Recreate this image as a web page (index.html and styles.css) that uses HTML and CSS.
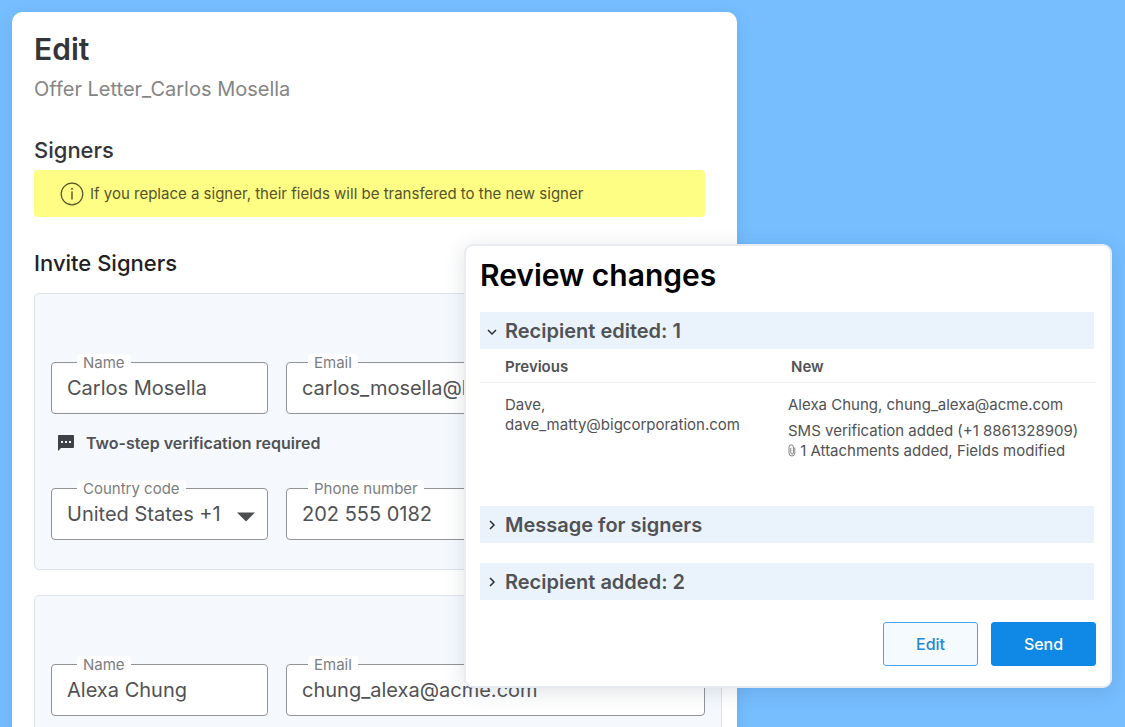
FILE: index.html
```html
<!DOCTYPE html>
<html lang="en">
<head>
    <meta charset="UTF-8">
    <meta name="viewport" content="width=device-width, initial-scale=1.0">
    <title>Edit - Offer Letter</title>
    <link rel="stylesheet" href="styles.css">
</head>
<body>

    <main class="sheet">
        <h1>Edit</h1>
        <p class="document-name">Offer Letter_Carlos Mosella</p>

        <h2 class="signers-title">Signers</h2>
        <div class="notice">
            <svg class="info-icon" viewBox="0 0 24 24" aria-hidden="true">
                <circle cx="12" cy="12" r="10.8" fill="none" stroke="currentColor" stroke-width="1.2"/>
                <path d="M12 9.5v8" stroke="currentColor" stroke-width="1.4"/>
                <circle cx="12" cy="6.8" r="1" fill="currentColor"/>
            </svg>
            <span>If you replace a signer, their fields will be transfered to the new signer</span>
        </div>

        <h2 class="invite-title">Invite Signers</h2>

        <section class="card">
            <div class="row">
                <div class="field">
                    <label for="name-1">Name</label>
                    <input type="text" id="name-1" value="Carlos Mosella">
                </div>
                <div class="field">
                    <label for="email-1">Email</label>
                    <input type="text" id="email-1" value="carlos_mosella@bigcorporation.com">
                </div>
            </div>
            <p class="verification">
                <svg class="sms-icon" viewBox="0 0 16 16" aria-hidden="true">
                    <path d="M1 0h14a1 1 0 0 1 1 1v11a1 1 0 0 1-1 1H3l-3 3V1a1 1 0 0 1 1-1z" fill="#3f4144"/>
                    <path d="M3 6h2v2H3zM7 6h2v2H7zM11 6h2v2h-2z" fill="#f5f9fe"/>
                </svg>
                Two-step verification required
            </p>
            <div class="row">
                <div class="field">
                    <label for="country-1">Country code</label>
                    <select id="country-1">
                        <option>United States +1</option>
                    </select>
                    <svg class="arrow-icon" viewBox="0 0 18 10" aria-hidden="true">
                        <path d="M0 0.5h18L9 9.5z" fill="#4c4e51"/>
                    </svg>
                </div>
                <div class="field">
                    <label for="phone-1">Phone number</label>
                    <input type="text" id="phone-1" value="202 555 0182">
                </div>
            </div>
        </section>

        <section class="card">
            <div class="row">
                <div class="field">
                    <label for="name-2">Name</label>
                    <input type="text" id="name-2" value="Alexa Chung">
                </div>
                <div class="field">
                    <label for="email-2">Email</label>
                    <input type="text" id="email-2" value="chung_alexa@acme.com">
                </div>
            </div>
        </section>
    </main>

    <div class="review" role="dialog" aria-labelledby="review-title">
        <h2 id="review-title">Review changes</h2>

        <button class="section-button" aria-expanded="true">
            <svg class="chevron" viewBox="0 0 10 10" aria-hidden="true">
                <path d="M1 4l4 4 4-4" fill="none" stroke="#2b2d30" stroke-width="1.5"/>
            </svg>
            Recipient edited: 1
        </button>
        <table class="changes">
            <thead>
                <tr>
                    <th>Previous</th>
                    <th>New</th>
                </tr>
            </thead>
            <tbody>
                <tr>
                    <td>Dave,<br>dave_matty@bigcorporation.com</td>
                    <td>
                        <p class="new-signer">Alexa Chung, chung_alexa@acme.com</p>
                        <p>SMS verification added (+1 8861328909)</p>
                        <p>
                            <svg class="clip-icon" viewBox="0 0 8 13" aria-hidden="true">
                                <path d="M6.8 3.5v5.6a2.9 2.9 0 0 1-5.8 0V3a2.2 2.2 0 0 1 4.4 0v5.8a1.3 1.3 0 0 1-2.6 0V4" fill="none" stroke="#666" stroke-width="0.8"/>
                            </svg>
                            1 Attachments added, Fields modified
                        </p>
                    </td>
                </tr>
            </tbody>
        </table>

        <button class="section-button" aria-expanded="false">
            <svg class="chevron" viewBox="0 0 10 10" aria-hidden="true">
                <path d="M3 1l4 4-4 4" fill="none" stroke="#2b2d30" stroke-width="1.5"/>
            </svg>
            Message for signers
        </button>
        <button class="section-button" aria-expanded="false">
            <svg class="chevron" viewBox="0 0 10 10" aria-hidden="true">
                <path d="M3 1l4 4-4 4" fill="none" stroke="#2b2d30" stroke-width="1.5"/>
            </svg>
            Recipient added: 2
        </button>

        <div class="actions">
            <button class="edit-button">Edit</button>
            <button class="send-button">Send</button>
        </div>
    </div>

</body>
</html>
```
FILE: styles.css
```css
* {
    box-sizing: border-box;
}

body {
    position: relative;
    height: 100vh;
    margin: 0;
    padding: 12px;
    overflow: hidden;
    background-color: #76beff;
    color: #505255;
    font-family: Inter, sans-serif;
}

h1, h2, p {
    margin: 0;
}

button, input, select {
    font-family: inherit;
    color: inherit;
}

.sheet {
    width: calc(100% - 376px);
    padding: 19px 15px 0 22px;
    background-color: #fff;
    border-radius: 10px;
    box-shadow: 0 4px 16px rgba(40, 80, 120, 0.15);
}

.sheet h1 {
    font-size: 30px;
    line-height: 36px;
    font-weight: 600;
    color: #333538;
}

.document-name {
    margin-top: 10px;
    font-size: 20px;
    line-height: 24px;
    color: #858585;
}

.signers-title, .invite-title {
    font-size: 22px;
    line-height: 28px;
    font-weight: 500;
    color: #333538;
}

.signers-title {
    margin-top: 35px;
}

.invite-title {
    margin: 32px 0 16px;
    color: #1f2123;
}

.notice {
    display: flex;
    align-items: center;
    gap: 6px;
    height: 47px;
    margin: 6px 17px 0 0;
    padding: 0 26px;
    background-color: #fffe84;
    border-radius: 4px;
    font-size: 15px;
    font-weight: 400;
    color: #55532c;
}

.info-icon {
    width: 24px;
    height: 24px;
}

.card {
    margin-bottom: 25px;
    padding: 68px 16px 29px;
    background-color: #f5f9fe;
    border: 1px solid #dce3ea;
    border-radius: 5px;
}

.row {
    display: grid;
    grid-template-columns: 217px 1fr;
    gap: 18px;
}

.field {
    position: relative;
}

.field input, .field select {
    display: block;
    width: 100%;
    height: 52px;
    margin: 0;
    padding: 0 15px;
    background-color: #fff;
    border: 1px solid #919396;
    border-radius: 4px;
    font-size: 20px;
    appearance: none;
}

/* label sits on top of the border line */
.field label {
    position: absolute;
    top: -8px;
    left: 26px;
    padding: 0 6px;
    background-color: #fff;
    border-radius: 4px;
    font-size: 15px;
    line-height: 18px;
    color: #7b7d80;
}

.field + .field label {
    left: 22px;
}

.arrow-icon {
    position: absolute;
    top: 24px;
    right: 13px;
    width: 18px;
    height: 10px;
    pointer-events: none;
}

.verification {
    display: flex;
    align-items: center;
    gap: 12px;
    height: 24px;
    margin: 17px 7px 33px;
    font-size: 16px;
    font-weight: 600;
}

.sms-icon {
    width: 16px;
    height: 16px;
}

.review {
    position: absolute;
    top: 244px;
    left: 464px;
    right: 13px;
    padding: 11px 14px 20px;
    background-color: #fff;
    border: 2px solid #e8ecf0;
    border-radius: 9px;
    box-shadow: 0 4px 20px rgba(40, 60, 90, 0.15);
}

.review h2 {
    margin-bottom: 19px;
    font-size: 30px;
    line-height: 36px;
    font-weight: 600;
    color: #000;
}

.section-button {
    display: flex;
    align-items: center;
    gap: 8px;
    width: calc(100% - 2px);
    height: 37px;
    margin-bottom: 20px;
    padding: 0 7px;
    background-color: #eaf2fb;
    border: none;
    font-size: 20px;
    font-weight: 600;
    text-align: left;
}

.chevron {
    width: 10px;
    height: 10px;
}

.section-button[aria-expanded="true"] {
    margin-bottom: 0;
}

.changes {
    width: 100%;
    height: 157px;
    border-collapse: collapse;
    table-layout: fixed;
    text-align: left;
    font-size: 15px;
    line-height: 20px;
}

.changes th {
    height: 33px;
    padding: 4px 0 0 25px;
    border-bottom: 1px solid #f0f2f5;
    font-weight: 600;
}

.changes td {
    padding: 12px 0 0 25px;
    vertical-align: top;
}

.changes th + th {
    padding-left: 3px;
}

.changes td + td {
    padding-left: 0;
}

.new-signer {
    margin-bottom: 6px;
}

.clip-icon {
    width: 8px;
    height: 13px;
    vertical-align: -1px;
}

.actions {
    display: flex;
    justify-content: flex-end;
    gap: 13px;
    margin-top: 22px;
}

.actions button {
    height: 44px;
    border: 1px solid #1088e6;
    border-radius: 3px;
    font-size: 16px;
    font-weight: 500;
    cursor: pointer;
}

.actions .edit-button {
    width: 95px;
    background-color: #f5fafe;
    border-color: #4aa3e6;
    color: #2688d4;
}

.actions .send-button {
    width: 105px;
    background-color: #1088e6;
    color: #fff;
}
```
